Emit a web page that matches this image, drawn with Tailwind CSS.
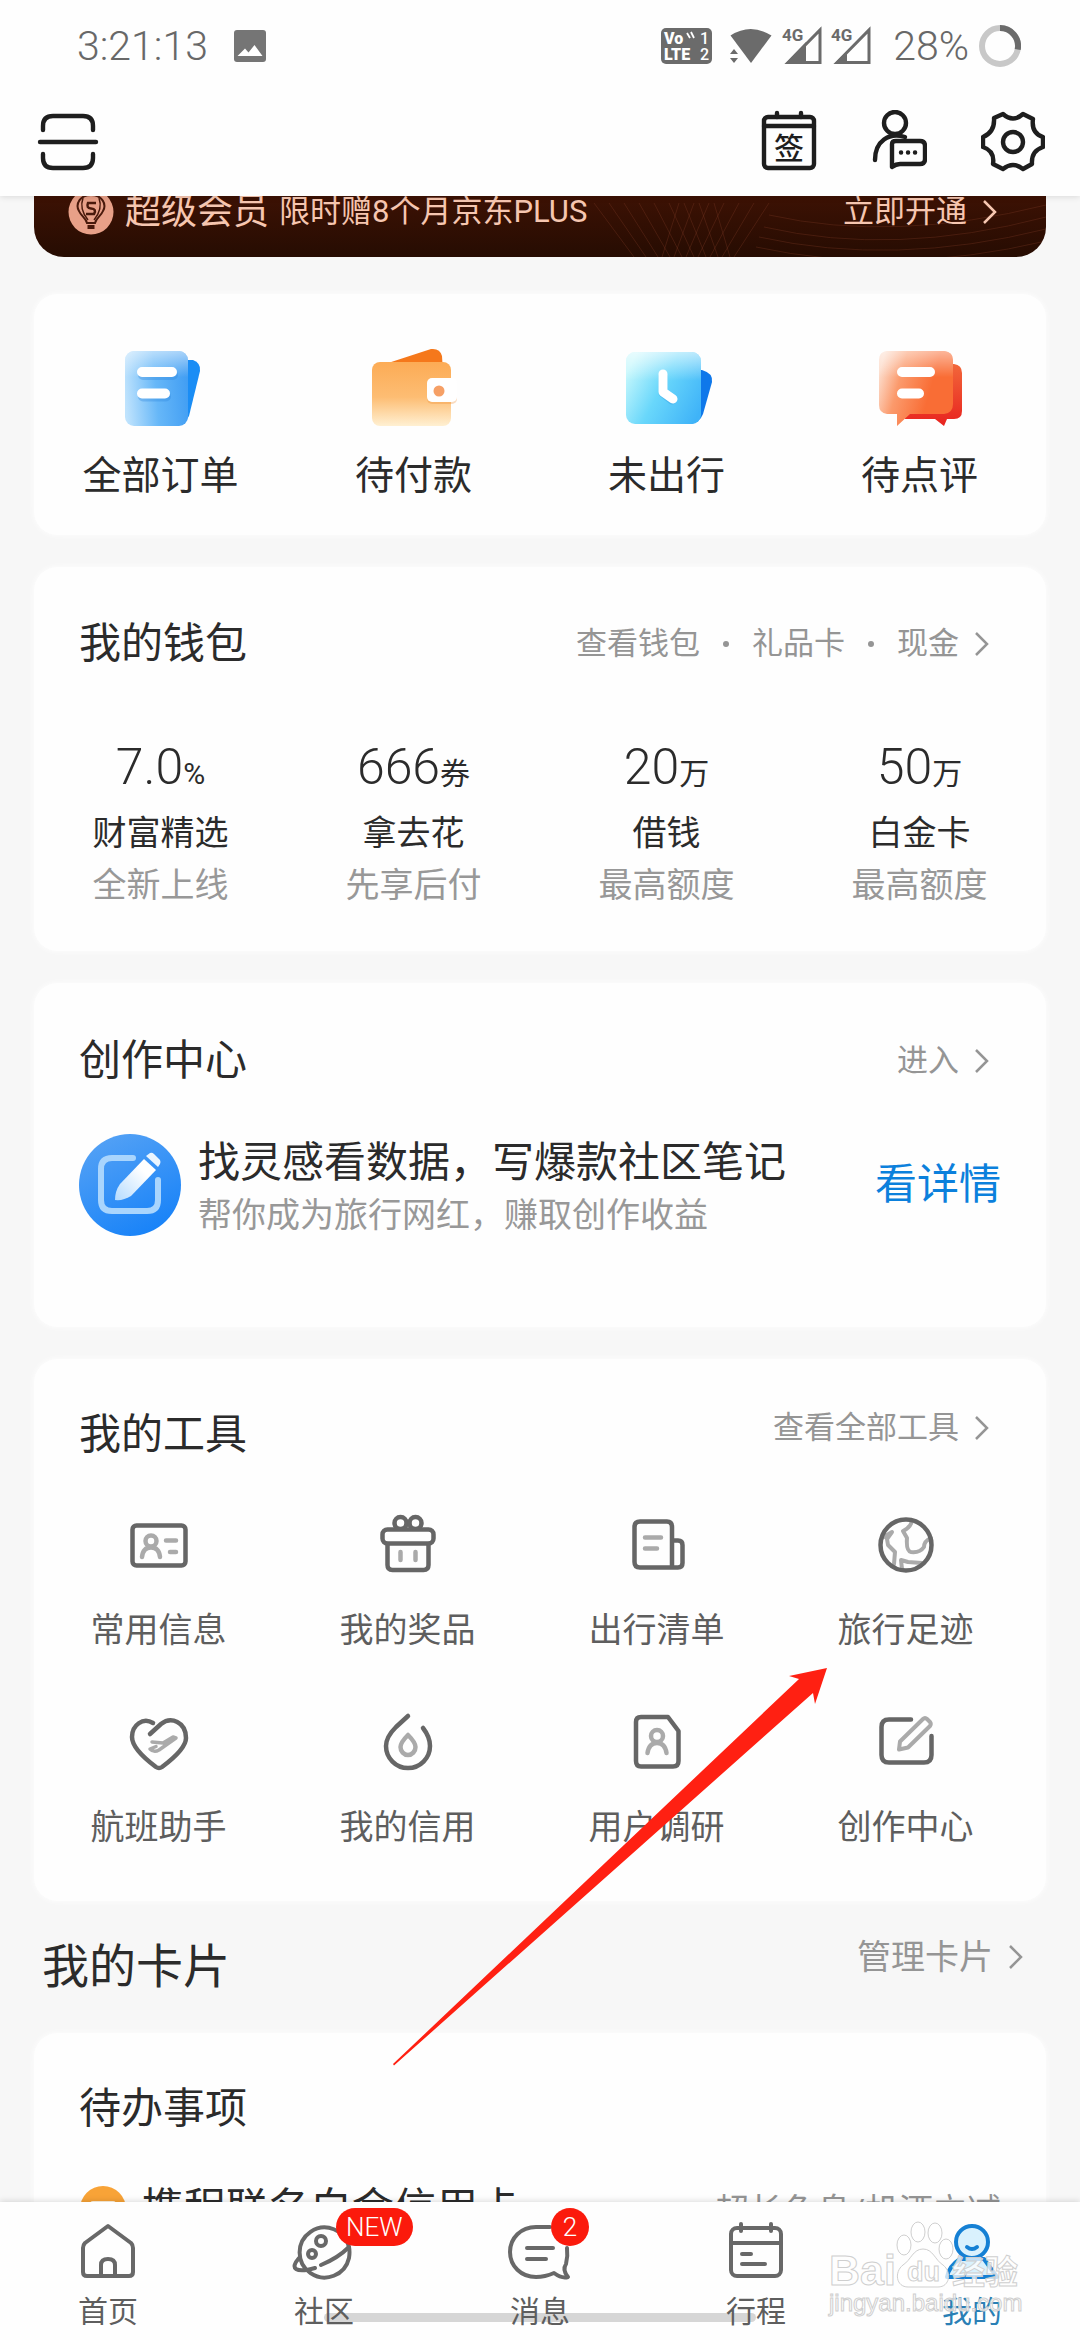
<!DOCTYPE html>
<html lang="zh-CN">

<head>
    <meta charset="UTF-8">
    <meta name="viewport" content="width=device-width, initial-scale=1.0">
    <title>我的</title>
    <script src="https://cdn.jsdelivr.net/npm/@tailwindcss/browser@4"></script>
</head>

<body class="relative h-screen flex flex-col overflow-hidden bg-[#f7f7f7] text-[#2b2b2b] font-['Roboto','Noto_Sans_CJK_SC',sans-serif]">

    <header class="relative z-10 shrink-0 bg-[#fefefe] shadow-[0_1px_6px_rgba(0,0,0,0.12)]">
        <!-- Status bar -->
        <div class="flex items-center justify-between h-[92px] pl-[77px] pr-[59px] text-[#686868] font-light">
            <div class="flex items-center gap-[26px]">
                <span class="text-[41px] leading-[48px]">3:21:13</span>
                <svg class="w-8 h-8" viewBox="0 0 32 32">
                    <rect width="32" height="32" rx="3" fill="#757575" />
                    <path d="M3.500 26 L11 18.500 L14.500 22.500 L20.500 15 L28.500 26 Z" fill="#fff" />
                </svg>
            </div>
            <div class="flex items-center">
                <svg class="w-[51px] h-[36px] mr-[17px]" viewBox="0 0 51 36">
                    <rect width="51" height="36" rx="5" fill="#6b6b6b" />
                    <g fill="#fff" font-family="Roboto, sans-serif" font-weight="900">
                        <text x="3" y="16" font-size="16">Vo</text>
                        <text x="3" y="32" font-size="16">LTE</text>
                        <text x="39" y="16" font-size="16" font-weight="500">1</text>
                        <text x="39" y="32" font-size="16" font-weight="500">2</text>
                    </g>
                    <path d="M26 5 L29 10 M30 4 L33 10" stroke="#fff" stroke-width="1.800" />
                </svg>
                <svg class="w-[43px] h-[36px] mr-[10px]" viewBox="0 0 43 36" fill="#6b6b6b">
                    <path d="M1.500 7.500 Q21.500 -5.500 42.500 7.500 L22 35 Z" />
                    <path d="M-1 20 L5 17 L13 29 L9 36 H-1 Z" fill="#fefefe" />
                    <path d="M1 26 L5 21 L9 26 Z M1 30 L5 35 L9 30 Z" />
                </svg>
                <svg class="w-[40px] h-[40px] mr-[9px]" viewBox="0 0 40 40">
                    <text x="0" y="15" font-size="17" font-weight="700" font-family="Roboto, sans-serif" fill="#6b6b6b">4G</text>
                    <path d="M6 36.500 L38 4 V36.500 Z" fill="none" stroke="#6b6b6b" stroke-width="3" />
                    <path d="M4 37 L24 16 V37 Z" fill="#6b6b6b" />
                </svg>
                <svg class="w-[40px] h-[40px] mr-[22px]" viewBox="0 0 40 40">
                    <text x="0" y="15" font-size="17" font-weight="700" font-family="Roboto, sans-serif" fill="#6b6b6b">4G</text>
                    <path d="M6 36.500 L38 4 V36.500 Z" fill="none" stroke="#6b6b6b" stroke-width="3" />
                    <path d="M4 37 L16 25 V37 Z" fill="#6b6b6b" />
                </svg>
                <span class="text-[41px] leading-[48px] mr-[10px]">28%</span>
                <svg class="w-[42px] h-[42px]" viewBox="0 0 42 42" fill="none" stroke-width="6">
                    <circle cx="21" cy="21" r="18" stroke="#c8c8c8" />
                    <path d="M21 3 A18 18 0 0 1 38.700 24.500" stroke="#6b6b6b" />
                </svg>
            </div>
        </div>

        <!-- Toolbar -->
        <div class="flex items-start justify-between h-[104px] pt-[18px] pl-[37px] pr-[35px]">
            <button type="button" aria-label="扫一扫">
                <svg class="w-[62px] h-[64px]" viewBox="0 0 62 64" fill="none" stroke="#1e1e1e" stroke-width="4.400" stroke-linecap="round" stroke-linejoin="round">
                    <path d="M6 20 V16 Q6 6 16 6 H46 Q56 6 56 16 V20" />
                    <path d="M3 32 H59" />
                    <path d="M6 44 V48 Q6 58 16 58 H46 Q56 58 56 48 V44" />
                </svg>
            </button>
            <div class="flex gap-[54px]">
                <button type="button" aria-label="签到">
                    <svg class="w-[56px] h-[64px]" viewBox="0 0 56 64" fill="none" stroke="#1e1e1e" stroke-width="4.400" stroke-linecap="round">
                        <rect x="3" y="7" width="50" height="51" rx="4" />
                        <path d="M3 16 H53 M16 3 V7 M40 3 V7" />
                        <text x="28" y="49" text-anchor="middle" font-size="30" font-weight="500" fill="#1e1e1e" stroke="none" font-family="'Noto Sans CJK SC', sans-serif">签</text>
                    </svg>
                </button>
                <button type="button" aria-label="客服">
                    <svg class="w-[56px] h-[64px]" viewBox="0 0 56 64" fill="none" stroke="#1e1e1e" stroke-width="4.400" stroke-linecap="round" stroke-linejoin="round">
                        <circle cx="24" cy="13" r="11" />
                        <path d="M4 50 C4 31 18 22 34 27" />
                        <path d="M21 57 V34 Q21 31 25 31 H49 Q54 31 54 36 V49 Q54 54 49 54 H29 Q25 54 21 57 Z" />
                        <path d="M30 42.500 H30.100 M37 42.500 H37.100 M44 42.500 H44.100" />
                    </svg>
                </button>
                <button type="button" aria-label="设置">
                    <svg class="w-[64px] h-[64px]" viewBox="0 0 64 64" fill="none" stroke="#1e1e1e" stroke-width="4.400" stroke-linejoin="round">
                        <path d="M13 8 L22 4 Q32 13 42 4 L52 9 Q50 23 62 27 V37 Q50 41 51 54 L42 59 Q32 51 22 59 L12 54 Q14 41 2 37 V27 Q14 22 13 8 Z" />
                        <circle cx="32" cy="32" r="10" />
                    </svg>
                </button>
            </div>
        </div>
    </header>

    <main class="flex-1 min-h-0 overflow-hidden px-[34px]">
        <!-- Membership banner -->
        <section class="relative flex items-center h-[90px] -mt-[29px] pl-[34px] pr-[49px] rounded-[30px] overflow-hidden bg-linear-to-b from-[#481405] to-[#260c02] text-[#f6c6b0]">
            <svg class="absolute inset-0 w-full h-full" viewBox="0 0 1012 90" preserveAspectRatio="none" fill="none" stroke="#7a3a24" stroke-opacity="0.350">
                <path d="M560 36 L600 90 M575 36 L612 90 M590 36 L624 90 M605 36 L636 90 M620 36 L648 90 M635 36 L660 90 M650 36 L672 90 M665 36 L684 90 M680 36 L696 90 M735 36 L700 90 M720 36 L688 90 M705 36 L676 90 M690 36 L664 90 M675 36 L652 90 M660 36 L640 90 M645 36 L628 90" />
                <path d="M730 60 Q860 90 1012 50 M725 70 Q860 100 1012 62 M722 80 Q860 110 1012 74 M735 48 Q860 76 1012 38" />
            </svg>
            <svg class="relative w-[46px] h-[46px] mr-[11px]" viewBox="0 0 46 46" fill="none" stroke="#4a1a0c" stroke-width="2">
                <circle cx="23" cy="23" r="22.500" fill="#e8a088" stroke="none" />
                <path d="M23 6 C12 6 7 15 11 22 C13 27 18 29 19 34 H27 C28 29 33 27 35 22 C39 15 34 6 23 6 Z" />
                <path d="M28 14 H20 Q18 19 23 19.500 Q29 20 26 25 H18" stroke-width="2.500" />
                <path d="M15 9 Q11 20 20 31 M31 9 Q35 20 26 31" stroke-width="1.500" />
                <path d="M20.500 37 H25.500 V39 H20.500 Z" fill="#4a1a0c" />
            </svg>
            <span class="relative text-[36px] leading-[48px]">超级会员</span>
            <span class="relative ml-[10px] text-[31px] leading-[48px]">限时赠8个月京东PLUS</span>
            <a href="#" class="relative ml-auto flex items-center gap-4 text-[31px] leading-[48px]">立即开通
                <svg class="w-[14px] h-[24px]" viewBox="0 0 14 24" fill="none" stroke="currentColor" stroke-width="2.500"><path d="M1 1 L12 12 L1 23" /></svg>
            </a>
        </section>

        <!-- Orders -->
        <section class="mt-[37px] grid grid-cols-4 pt-[54px] pb-[39px] rounded-[24px] bg-[#fefefe] shadow-[0_0_6px_#fff] text-[39px] leading-[40px]">
            <a href="#" class="flex flex-col items-center gap-7">
                <svg class="w-20 h-20" viewBox="0 0 80 80">
                    <defs>
                        <linearGradient id="o1" x1="0" y1="0.600" x2="1" y2="0.500">
                            <stop offset="0" stop-color="#bfe3fd" />
                            <stop offset="0.500" stop-color="#66b7f8" />
                            <stop offset="1" stop-color="#429ef3" />
                        </linearGradient>
                        <linearGradient id="o1t" x1="0" y1="0" x2="0" y2="1">
                            <stop offset="0" stop-color="#fff" stop-opacity="0.550" />
                            <stop offset="0.350" stop-color="#fff" stop-opacity="0" />
                        </linearGradient>
                    </defs>
                    <path d="M55 12 L72 12 Q80 15 79 23 L68 68 Q64 76 55 77 Z" fill="#1a8df5" />
                    <rect x="4" y="3" width="63" height="75" rx="9" fill="url(#o1)" />
                    <rect x="4" y="3" width="63" height="75" rx="9" fill="url(#o1t)" />
                    <path d="M21 24 H51 M21 45.500 H44" stroke="#2e86dd" stroke-opacity="0.350" stroke-width="10" stroke-linecap="round" transform="translate(1 3)" />
                    <path d="M21 24 H51 M21 45.500 H44" stroke="#fff" stroke-width="10" stroke-linecap="round" />
                </svg>
                全部订单
            </a>
            <a href="#" class="flex flex-col items-center gap-7">
                <svg class="w-[88px] h-20" viewBox="0 0 88 80">
                    <defs>
                        <linearGradient id="o2" x1="0" y1="0" x2="0" y2="1">
                            <stop offset="0" stop-color="#fcab55" />
                            <stop offset="0.550" stop-color="#fdbd73" />
                            <stop offset="1" stop-color="#fff0d2" />
                        </linearGradient>
                    </defs>
                    <path d="M12 17 L61 1 Q70 0 72 8 L73 24 H12 Z" fill="#f5781b" />
                    <rect x="2" y="14" width="79" height="64" rx="8" fill="url(#o2)" />
                    <rect x="57" y="32" width="30" height="24" rx="5" fill="#f08a30" fill-opacity="0.300" />
                    <rect x="57" y="30" width="30" height="24" rx="5" fill="#fff" />
                    <circle cx="69" cy="43" r="5.500" fill="#f6a066" />
                </svg>
                待付款
            </a>
            <a href="#" class="flex flex-col items-center gap-7">
                <svg class="w-[92px] h-20" viewBox="0 0 92 80">
                    <defs>
                        <linearGradient id="o3" x1="0" y1="0.300" x2="1" y2="0.800">
                            <stop offset="0" stop-color="#c4f7fc" />
                            <stop offset="0.450" stop-color="#69d7fb" />
                            <stop offset="1" stop-color="#3fb3f8" />
                        </linearGradient>
                        <linearGradient id="o3t" x1="0" y1="0" x2="0" y2="1">
                            <stop offset="0" stop-color="#fff" stop-opacity="0.600" />
                            <stop offset="0.400" stop-color="#fff" stop-opacity="0" />
                        </linearGradient>
                    </defs>
                    <path d="M72 22 H81 Q92 25 91 34 L82 66 Q79 74 70 76 Z" fill="#0f78ea" />
                    <rect x="5" y="4" width="75" height="72" rx="9" fill="url(#o3)" />
                    <rect x="5" y="4" width="75" height="72" rx="9" fill="url(#o3t)" />
                    <path d="M42 28 V45 L51 52" fill="none" stroke="#2b98e0" stroke-opacity="0.350" stroke-width="9" stroke-linecap="round" stroke-linejoin="round" />
                    <path d="M42 26 V44 L52 51" fill="none" stroke="#fff" stroke-width="9" stroke-linecap="round" stroke-linejoin="round" />
                </svg>
                未出行
            </a>
            <a href="#" class="flex flex-col items-center gap-7">
                <svg class="w-[86px] h-20" viewBox="0 0 86 80">
                    <defs>
                        <linearGradient id="o4" x1="0" y1="0.300" x2="0.700" y2="0.500">
                            <stop offset="0" stop-color="#fcdccb" />
                            <stop offset="0.400" stop-color="#fb9a6c" />
                            <stop offset="1" stop-color="#f96d35" />
                        </linearGradient>
                        <linearGradient id="o4b" x1="0" y1="0" x2="0" y2="1">
                            <stop offset="0" stop-color="#f2673a" />
                            <stop offset="1" stop-color="#e8231f" />
                        </linearGradient>
                        <linearGradient id="o4t" x1="0" y1="0" x2="0" y2="1">
                            <stop offset="0" stop-color="#fff" stop-opacity="0.500" />
                            <stop offset="0.350" stop-color="#fff" stop-opacity="0" />
                        </linearGradient>
                    </defs>
                    <path d="M28 16 H77 Q85 17 85 25 V63 Q85 71 77 71 H70 L67 78 L58 71 H28 Z" fill="url(#o4b)" />
                    <path d="M10 3 H67 Q76 4 76 12 V56 Q76 65 67 66 H33 L20 78 V66 H10 Q2 65 2 57 V12 Q2 4 10 3 Z" fill="url(#o4)" />
                    <path d="M10 3 H67 Q76 4 76 12 V56 Q76 65 67 66 H33 L20 78 V66 H10 Q2 65 2 57 V12 Q2 4 10 3 Z" fill="url(#o4t)" />
                    <path d="M25 24 H53 M25 45.500 H42" stroke="#fff" stroke-width="10" stroke-linecap="round" />
                </svg>
                待点评
            </a>
        </section>

        <!-- Wallet -->
        <section class="mt-8 pt-[53px] pb-[40px] rounded-[24px] bg-[#fefefe] shadow-[0_0_6px_#fff]">
            <div class="flex items-center justify-between h-12 pl-[45px] pr-[57px]">
                <h2 class="text-[42px] leading-[48px] font-normal">我的钱包</h2>
                <div class="flex items-center text-[31px] leading-[48px] text-[#959595]">
                    <a href="#">查看钱包</a>
                    <span class="w-[6px] h-[6px] mx-[23px] rounded-full bg-[#959595]"></span>
                    <a href="#">礼品卡</a>
                    <span class="w-[6px] h-[6px] mx-[23px] rounded-full bg-[#959595]"></span>
                    <a href="#">现金</a>
                    <svg class="w-[14px] h-[24px] ml-4" viewBox="0 0 14 24" fill="none" stroke="currentColor" stroke-width="2.500"><path d="M1 1 L12 12 L1 23" /></svg>
                </div>
            </div>
            <div class="grid grid-cols-4 mt-[71px] text-center text-[34px] leading-[52px]">
                <a href="#">
                    <p class="mb-3 text-[50px] leading-[56px] font-light">7.0<span class="text-[30px] leading-none font-normal">%</span></p>
                    <p>财富精选</p>
                    <p class="text-[#989898]">全新上线</p>
                </a>
                <a href="#">
                    <p class="mb-3 text-[50px] leading-[56px] font-light">666<span class="text-[30px] leading-none font-normal">券</span></p>
                    <p>拿去花</p>
                    <p class="text-[#989898]">先享后付</p>
                </a>
                <a href="#">
                    <p class="mb-3 text-[50px] leading-[56px] font-light">20<span class="text-[30px] leading-none font-normal">万</span></p>
                    <p>借钱</p>
                    <p class="text-[#989898]">最高额度</p>
                </a>
                <a href="#">
                    <p class="mb-3 text-[50px] leading-[56px] font-light">50<span class="text-[30px] leading-none font-normal">万</span></p>
                    <p>白金卡</p>
                    <p class="text-[#989898]">最高额度</p>
                </a>
            </div>
        </section>

        <!-- Creator center -->
        <section class="mt-8 pt-[54px] pb-[86px] rounded-[24px] bg-[#fefefe] shadow-[0_0_6px_#fff]">
            <div class="flex items-center justify-between h-12 pl-[45px] pr-[57px]">
                <h2 class="text-[42px] leading-[48px] font-normal">创作中心</h2>
                <a href="#" class="flex items-center gap-4 text-[31px] leading-[48px] text-[#959595]">进入
                    <svg class="w-[14px] h-[24px]" viewBox="0 0 14 24" fill="none" stroke="currentColor" stroke-width="2.500"><path d="M1 1 L12 12 L1 23" /></svg>
                </a>
            </div>
            <div class="flex items-center mt-[44px] pl-[45px] pr-[45px]">
                <svg class="w-[102px] h-[102px] mr-[17px]" viewBox="0 0 102 102">
                    <defs>
                        <linearGradient id="c1" x1="0.200" y1="0" x2="0.700" y2="1">
                            <stop offset="0" stop-color="#55a2f5" />
                            <stop offset="1" stop-color="#1782f8" />
                        </linearGradient>
                        <linearGradient id="c2" x1="1" y1="0" x2="0" y2="1">
                            <stop offset="0.300" stop-color="#fff" />
                            <stop offset="1" stop-color="#b4dbff" />
                        </linearGradient>
                    </defs>
                    <circle cx="51" cy="51" r="51" fill="url(#c1)" />
                    <path d="M54 24 H33 Q22 24 22 35 V66 Q22 77 33 77 H68 Q79 77 79 66 V46" fill="none" stroke="#a9d5fd" stroke-width="6" stroke-linecap="round" />
                    <path d="M65 25 L77 36 L52 62 Q44 67 36 66 Q36 57 41 50 Z" fill="url(#c2)" />
                    <path d="M67 22 L71 19 Q73 18 75 20 L81 26 Q82 28 81 30 L79 33 Z" fill="#eaf5ff" />
                </svg>
                <div class="pt-2 leading-[52px]">
                    <p class="text-[42px]">找灵感看数据，写爆款社区笔记</p>
                    <p class="text-[34px] text-[#989898]">帮你成为旅行网红，赚取创作收益</p>
                </div>
                <a href="#" class="ml-auto text-[42px] leading-[52px] text-[#0b80dc]">看详情</a>
            </div>
        </section>

        <!-- Tools -->
        <section class="mt-8 pt-[52px] pb-[54px] rounded-[24px] bg-[#fefefe] shadow-[0_0_6px_#fff]">
            <div class="flex items-start justify-between h-12 pl-[45px] pr-[57px]">
                <h2 class="text-[42px] leading-[48px] font-normal">我的工具</h2>
                <a href="#" class="flex items-center gap-4 text-[31px] leading-[34px] text-[#959595]">查看全部工具
                    <svg class="w-[14px] h-[24px]" viewBox="0 0 14 24" fill="none" stroke="currentColor" stroke-width="2.500"><path d="M1 1 L12 12 L1 23" /></svg>
                </a>
            </div>
            <div class="grid grid-cols-4 gap-y-[60px] mt-[54px] pr-4 text-[34px] leading-[40px] text-[#5e5e5e]">
                <a href="#" class="flex flex-col items-center gap-[33px]">
                    <svg class="w-16 h-16" viewBox="0 0 64 64" fill="none" stroke-width="4.500" stroke-linecap="round">
                        <rect x="5.500" y="12.500" width="53" height="40" rx="4" stroke="#666" />
                        <g stroke="#aaa">
                            <circle cx="24" cy="28" r="5.500" />
                            <path d="M15 44 Q16 34.500 24 34.500 Q32 34.500 33 44 M39 27.500 H49 M43 39 H49" />
                        </g>
                    </svg>
                    常用信息
                </a>
                <a href="#" class="flex flex-col items-center gap-[33px]">
                    <svg class="w-16 h-16" viewBox="0 0 64 64" fill="none" stroke="#666" stroke-width="4.500" stroke-linecap="round" stroke-linejoin="round">
                        <circle cx="24.500" cy="10" r="6" />
                        <circle cx="39.500" cy="10" r="6" />
                        <rect x="6.500" y="16.500" width="51" height="14" rx="5" fill="#fefefe" />
                        <path d="M11.500 31 V52 Q11.500 57 16.500 57 H47.500 Q52.500 57 52.500 52 V31" />
                        <path d="M24.500 39 V47 M39.500 39 V47" stroke="#aaa" />
                    </svg>
                    我的奖品
                </a>
                <a href="#" class="flex flex-col items-center gap-[33px]">
                    <svg class="w-16 h-16" viewBox="0 0 64 64" fill="none" stroke="#666" stroke-width="4.500" stroke-linecap="round" stroke-linejoin="round">
                        <path d="M47 54.500 H15 Q9.500 54.500 9.500 49 V14 Q9.500 8.500 15 8.500 H42 Q47 8.500 47 14 V54.500 H53 Q57.500 54.500 57.500 50 V32 Q57.500 27.500 53 27.500 H47" />
                        <path d="M20 24.500 H36 M20 35.500 H32" stroke="#aaa" />
                    </svg>
                    出行清单
                </a>
                <a href="#" class="flex flex-col items-center gap-[33px]">
                    <svg class="w-16 h-16" viewBox="0 0 64 64" fill="none" stroke-width="4.500" stroke-linecap="round" stroke-linejoin="round">
                        <g stroke="#aaa" stroke-width="4">
                            <path d="M8 25 L18 19 L13 26 L14 32 L21 39 L20 51" />
                            <path d="M38 8 Q36 15 29 18 L33 25 Q32 38 37 39 Q46 40 50 34 Q50 28 57 25" />
                            <path d="M28 56 L27 47 L34 49 L48 50" />
                        </g>
                        <circle cx="32" cy="32" r="25.500" stroke="#666" />
                    </svg>
                    旅行足迹
                </a>
                <a href="#" class="flex flex-col items-center gap-[33px]">
                    <svg class="w-16 h-16" viewBox="0 0 64 64" fill="none" stroke="#666" stroke-width="4.500" stroke-linecap="round" stroke-linejoin="round">
                        <path d="M26 13 C16 7 5 15 5 27 C5 38 21 51 29 57 Q32 59 35 57 C43 51 59 38 59 28 C59 12 44 6 34 14 L23 24" />
                        <path d="M25 32 L36 33 L46 27 L49 28 L32 40 Q27 43 23 39 L29 36.500" stroke="#aaa" stroke-width="3.500" />
                    </svg>
                    航班助手
                </a>
                <a href="#" class="flex flex-col items-center gap-[33px]">
                    <svg class="w-16 h-16" viewBox="0 0 64 64" fill="none" stroke="#666" stroke-width="4.500" stroke-linecap="round" stroke-linejoin="round">
                        <path d="M32 6 L20 17 C13 24 10 31 10 36 A22 22 0 0 0 54 36 Q54 27 47 18" />
                        <path d="M32 25 C27 30 24.500 33 24.500 37 A7.500 8 0 0 0 39.500 37 C39.500 33 37 30 32 25 Z" stroke="#aaa" />
                    </svg>
                    我的信用
                </a>
                <a href="#" class="flex flex-col items-center gap-[33px]">
                    <svg class="w-16 h-16" viewBox="0 0 64 64" fill="none" stroke="#666" stroke-width="4.500" stroke-linecap="round" stroke-linejoin="round">
                        <path d="M16 7 H43 L53.500 21 V51 Q53.500 56.500 48 56.500 H16 Q11 56.500 11 51 V12 Q11 7 16 7 Z" />
                        <g stroke="#aaa">
                            <circle cx="32" cy="26" r="6" />
                            <path d="M22.500 43 Q24 33 32 33 Q40 33 41.500 43" />
                        </g>
                    </svg>
                    用户调研
                </a>
                <a href="#" class="flex flex-col items-center gap-[33px]">
                    <svg class="w-16 h-16" viewBox="0 0 64 64" fill="none" stroke="#666" stroke-width="4.500" stroke-linecap="round" stroke-linejoin="round">
                        <path d="M37 9.500 H15 Q7.500 9.500 7.500 17 V45 Q7.500 52.500 15 52.500 H50 Q57.500 52.500 57.500 45 V26" />
                        <path d="M25 39.500 L26 31.500 L49 9 Q51 7 53 9 L56 12 Q57.500 14 56 16 L34 37.500 Z" stroke="#aaa" stroke-width="4" />
                    </svg>
                    创作中心
                </a>
            </div>
        </section>

        <!-- Cards -->
        <div class="flex items-start justify-between mt-[38px] pl-[8px] pr-[23px]">
            <h2 class="text-[47px] leading-[56px] font-normal">我的卡片</h2>
            <a href="#" class="flex items-center gap-4 text-[34px] leading-[36px] text-[#959595]">管理卡片
                <svg class="w-[14px] h-[24px]" viewBox="0 0 14 24" fill="none" stroke="currentColor" stroke-width="2.500"><path d="M1 1 L12 12 L1 23" /></svg>
            </a>
        </div>
        <section class="mt-[38px] pt-[52px] pb-[40px] rounded-[24px] bg-[#fefefe] shadow-[0_0_6px_#fff]">
            <h2 class="pl-[45px] text-[42px] leading-[48px] font-normal">待办事项</h2>
            <div class="flex items-center mt-[48px] pl-[46px] pr-[45px]">
                <svg class="w-[46px] h-[46px] mr-4" viewBox="0 0 46 46">
                    <circle cx="23" cy="23" r="23" fill="#f8a337" />
                    <rect x="10" y="15" width="26" height="18" rx="3" fill="#fff3e0" />
                </svg>
                <span class="text-[42px] leading-[52px]">携程联名白金信用卡</span>
                <span class="ml-auto pt-1 text-[34px] leading-[52px] text-[#959595]">超长免息/机酒立减</span>
            </div>
        </section>
    </main>

    <!-- Tab bar -->
    <nav class="relative z-10 shrink-0 h-[138px] pt-[18px] bg-[#fefefe] shadow-[0_-1px_6px_rgba(0,0,0,0.14)] text-[30px] leading-[36px] text-[#5e5e5e]">
        <div class="absolute left-[30%] bottom-[18px] w-[40%] h-[9px] rounded-full bg-[#d6d6d6]"></div>
        <div class="relative grid grid-cols-5">
            <a href="#" class="flex flex-col items-center gap-3">
                <svg class="w-16 h-[62px]" viewBox="0 0 64 62" fill="none" stroke="#686868" stroke-width="4" stroke-linecap="round" stroke-linejoin="round">
                    <path d="M32 6 L55 23 Q57 25 57 28 V52 Q57 56 53 56 H11 Q7 56 7 52 V28 Q7 25 9 23 Z" />
                    <path d="M25 56 V45 Q25 39 32 39 Q39 39 39 45 V56" />
                </svg>
                首页
            </a>
            <a href="#" class="relative flex flex-col items-center gap-3">
                <svg class="w-16 h-[62px]" viewBox="0 0 64 62" fill="none" stroke="#686868" stroke-width="4" stroke-linecap="round" stroke-linejoin="round">
                    <path d="M57 27 A25 25 0 1 0 57 38 Q58 32 57 27" />
                    <circle cx="29" cy="21" r="5" />
                    <circle cx="20" cy="34" r="4" />
                    <path d="M57 27 Q46 38 29 45 M23 48 Q9 52 4 49 Q0 46 7 38" />
                </svg>
                社区
                <span class="absolute left-[120px] top-[-12px] px-[10px] rounded-full bg-[#fb1a0c] text-[26px] leading-[38px] font-light text-white">NEW</span>
            </a>
            <a href="#" class="relative flex flex-col items-center gap-3">
                <svg class="w-16 h-[62px]" viewBox="0 0 64 62" fill="none" stroke="#686868" stroke-width="4" stroke-linecap="round" stroke-linejoin="round">
                    <path d="M42 7 H28 C13 7 2 18 2 32 C2 46 13 57 28 57 Q37 57 46 53 Q54 59 60 57 Q54 50 58 44 Q60 36 59 28" />
                    <path d="M19 28 H45 M19 39 H38" />
                </svg>
                消息
                <span class="absolute left-[119px] top-[-12px] w-[38px] rounded-full bg-[#fb1a0c] text-center text-[26px] leading-[38px] font-light text-white">2</span>
            </a>
            <a href="#" class="flex flex-col items-center gap-3">
                <svg class="w-16 h-[62px]" viewBox="0 0 64 62" fill="none" stroke="#686868" stroke-width="4" stroke-linecap="round" stroke-linejoin="round">
                    <rect x="7" y="8" width="50" height="48" rx="6" />
                    <path d="M7 23 H57 M17 4 V11 M47 4 V11 M18 34 H27 M18 44 H41" />
                </svg>
                行程
            </a>
            <a href="#" class="flex flex-col items-center gap-3 text-[#2a7fb5]">
                <svg class="w-16 h-[62px]" viewBox="0 0 64 62" fill="#d9f1fd" stroke="#1580d4" stroke-width="4" stroke-linecap="round" stroke-linejoin="round">
                    <path d="M20 39 H44 L57 57 H7 Q9 46 20 39 Z" />
                    <circle cx="32" cy="22" r="16" />
                    <path d="M27 27 Q32 31 37 27" fill="none" />
                </svg>
                我的
            </a>
        </div>
    </nav>

    <!-- Red pointer towards the travel footprint tool -->
    <svg class="absolute z-20 left-[393px] top-[1668px] w-[434px] h-[398px] pointer-events-none" viewBox="0 0 434 398">
        <path d="M434 0 L396 8 L406 11 L0 396 L1 397.500 L420 25 L422 36 Z" fill="#ff2012" />
    </svg>

    <!-- Watermark -->
    <svg class="absolute z-20 right-[54px] bottom-[20px] w-[200px] h-[102px] pointer-events-none" viewBox="0 0 200 102" fill="#fff" fill-opacity="0.750" stroke="#cfcfcf" stroke-width="1">
        <g font-family="'Liberation Sans', 'Noto Sans CJK SC', sans-serif">
            <text x="3" y="67" font-size="43" font-weight="700">Bai</text>
            <ellipse cx="78" cy="27" rx="7" ry="10" />
            <ellipse cx="92" cy="14" rx="7" ry="10" />
            <ellipse cx="109" cy="15" rx="7" ry="10" />
            <ellipse cx="120" cy="31" rx="7" ry="10" />
            <path d="M97 31 C87 31 85 42 77 47 C68 54 70 69 82 69 H112 C124 69 126 54 117 47 C109 42 107 31 97 31 Z" />
            <text x="81" y="63" font-size="27" font-weight="700">du</text>
            <text x="126" y="66" font-size="33" font-weight="700">经验</text>
            <text x="3" y="93" font-size="24">jingyan.baidu.com</text>
        </g>
    </svg>
</body>

</html>
